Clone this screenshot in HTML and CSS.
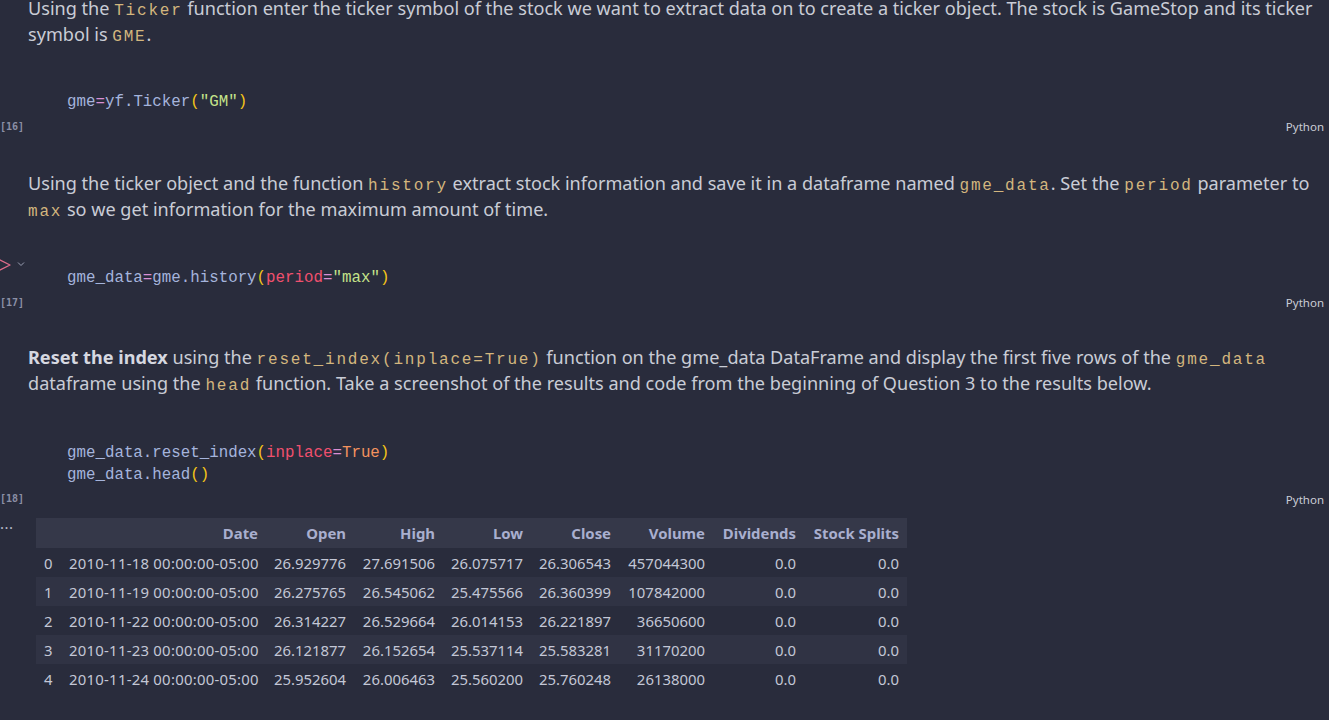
FILE: index.html
```html
<!DOCTYPE html>
<html>
<head>
<meta charset="utf-8">
<link rel="stylesheet" href="styles.css">
</head>
<body>
<div class="nb">
  <div class="md first">
    <p>Using the <code>Ticker</code> function enter the ticker symbol of the stock we want to extract data on to create a ticker object. The stock is GameStop and its ticker<br>symbol is <code>GME</code>.</p>
  </div>

  <div class="cell">
    <pre class="src"><span class="id">gme</span><span class="op">=</span><span class="id">yf.Ticker</span><span class="br">(</span><span class="str">"GM"</span><span class="br">)</span></pre>
    <div class="foot"><span class="count">[16]</span><span class="lang">Python</span></div>
  </div>

  <div class="md">
    <p>Using the ticker object and the function <code>history</code> extract stock information and save it in a dataframe named <code>gme_data</code>. Set the <code>period</code> parameter to<br><code>max</code> so we get information for the maximum amount of time.</p>
  </div>

  <div class="cell second">
    <div class="gutter">
      <svg class="run" width="12" height="16" viewBox="0 0 12 16"><path d="M-4 1 L10 8 L-4 15" fill="none" stroke="#e06c8a" stroke-width="1.3" stroke-linejoin="round"/></svg>
      <svg class="chev" width="8" height="6" viewBox="0 0 8 6"><path d="M1 1.5 L4 4.5 L7 1.5" fill="none" stroke="#9aa0b4" stroke-width="1"/></svg>
    </div>
    <pre class="src"><span class="id">gme_data</span><span class="op">=</span><span class="id">gme.history</span><span class="br">(</span><span class="kw">period</span><span class="op">=</span><span class="str">"max"</span><span class="br">)</span></pre>
    <div class="foot"><span class="count">[17]</span><span class="lang">Python</span></div>
  </div>

  <div class="md third-md">
    <p><b>Reset the index</b> using the <code>reset_index(inplace=True)</code> function on the gme_data DataFrame and display the first five rows of the <code>gme_data</code><br>dataframe using the <code>head</code> function. Take a screenshot of the results and code from the beginning of Question 3 to the results below.</p>
  </div>

  <div class="cell third">
    <pre class="src"><span class="id">gme_data.reset_index</span><span class="br">(</span><span class="kw">inplace</span><span class="op">=</span><span class="const">True</span><span class="br">)</span>
<span class="id">gme_data.head</span><span class="br">()</span></pre>
    <div class="foot last"><span class="count">[18]</span><span class="lang">Python</span></div>
  </div>

  <div class="output">
    <div class="more">...</div>
    <table class="df">
      <colgroup>
        <col class="c-idx"><col class="c-date"><col class="c-num"><col class="c-num2"><col class="c-num"><col class="c-num"><col class="c-vol"><col class="c-div"><col class="c-split">
      </colgroup>
      <thead>
        <tr><th></th><th>Date</th><th>Open</th><th>High</th><th>Low</th><th>Close</th><th>Volume</th><th>Dividends</th><th>Stock Splits</th></tr>
      </thead>
      <tbody>
        <tr><td class="idx">0</td><td class="date">2010-11-18 00:00:00-05:00</td><td>26.929776</td><td>27.691506</td><td>26.075717</td><td>26.306543</td><td>457044300</td><td>0.0</td><td>0.0</td></tr>
        <tr><td class="idx">1</td><td class="date">2010-11-19 00:00:00-05:00</td><td>26.275765</td><td>26.545062</td><td>25.475566</td><td>26.360399</td><td>107842000</td><td>0.0</td><td>0.0</td></tr>
        <tr><td class="idx">2</td><td class="date">2010-11-22 00:00:00-05:00</td><td>26.314227</td><td>26.529664</td><td>26.014153</td><td>26.221897</td><td>36650600</td><td>0.0</td><td>0.0</td></tr>
        <tr><td class="idx">3</td><td class="date">2010-11-23 00:00:00-05:00</td><td>26.121877</td><td>26.152654</td><td>25.537114</td><td>25.583281</td><td>31170200</td><td>0.0</td><td>0.0</td></tr>
        <tr><td class="idx">4</td><td class="date">2010-11-24 00:00:00-05:00</td><td>25.952604</td><td>26.006463</td><td>25.560200</td><td>25.760248</td><td>26138000</td><td>0.0</td><td>0.0</td></tr>
      </tbody>
    </table>
  </div>
</div>
</body>
</html>
```

FILE: styles.css
```css
html, body {
  margin: 0;
  padding: 0;
  background: #292c3c;
  overflow: hidden;
  height: 720px;
}

.nb {
  width: 1329px;
  font-family: "Noto Sans", "Open Sans", sans-serif;
  color: #c9ccd6;
}

.md {
  padding: 0 10px 0 28px;
  margin-top: 37px;
}
.md.first {
  margin-top: -5px;
}
.md.third-md {
  margin-top: 35px;
}
.md p {
  margin: 0;
  font-size: 18.1px;
  line-height: 26px;
  white-space: nowrap;
}
.md b {
  font-weight: 700;
  color: #d6d8e0;
}
.md code {
  font-family: "Liberation Mono", "DejaVu Sans Mono", monospace;
  font-size: 16px;
  line-height: 1;
  letter-spacing: 1.8px;
  color: #d3b67e;
}

.cell {
  position: relative;
  margin-top: 44px;
}
.cell.second {
  margin-top: 45px;
}
.cell.third {
  margin-top: 46px;
}

.src {
  margin: 0;
  padding-left: 67px;
  font-family: "Liberation Mono", "DejaVu Sans Mono", monospace;
  font-size: 15.8px;
  line-height: 22px;
  color: #a5b4dc;
}
.src .id { color: #a5b4dc; }
.src .op { color: #d98fd4; }
.src .br { color: #f5c518; }
.src .str { color: #c4e38a; }
.src .kw { color: #f0506e; }
.src .const { color: #f3925e; }

.gutter {
  position: absolute;
  left: 0;
  top: -10px;
  display: flex;
  align-items: center;
  gap: 5px;
}
.gutter .run { display: block; }
.gutter .chev { display: block; margin-top: -3px; }

.foot {
  display: flex;
  justify-content: space-between;
  align-items: center;
  height: 14px;
  margin-top: 6px;
  padding-right: 5px;
}
.foot.last {
  margin-top: 5px;
}
.foot.last .lang {
  position: relative;
  top: 1px;
}
.count {
  font-family: "DejaVu Sans Mono", monospace;
  font-size: 10px;
  font-weight: 700;
  color: #8b90a6;
}
.lang {
  font-family: "Noto Sans", sans-serif;
  font-size: 11.5px;
  color: #c9ccd6;
}

.output {
  position: relative;
  margin-top: 13px;
  padding-left: 36px;
}
.more {
  position: absolute;
  left: 0;
  top: -3px;
  font-size: 15px;
  letter-spacing: 0.5px;
  color: #b8bccb;
  line-height: 16px;
}

.df {
  border-collapse: collapse;
  table-layout: fixed;
  width: 871px;
  font-family: "Noto Sans", sans-serif;
  font-size: 14.9px;
  color: #c3c7d6;
}
.df col.c-idx { width: 25px; }
.df col.c-date { width: 205px; }
.df col.c-num { width: 88px; }
.df col.c-num2 { width: 89px; }
.df col.c-vol { width: 94px; }
.df col.c-div { width: 91px; }
.df col.c-split { width: 103px; }

.df th, .df td {
  padding: 0 8px;
  text-align: right;
  white-space: nowrap;
  height: 29px;
  line-height: 20px;
}
.df td.idx {
  text-align: left;
}
.df td.date {
  letter-spacing: 0.25px;
}
.df thead tr {
  background: #353849;
}
.df th {
  font-weight: 700;
  color: #a9afcf;
  height: 30px;
}
.df tbody tr:nth-child(even) {
  background: #303344;
}
```
